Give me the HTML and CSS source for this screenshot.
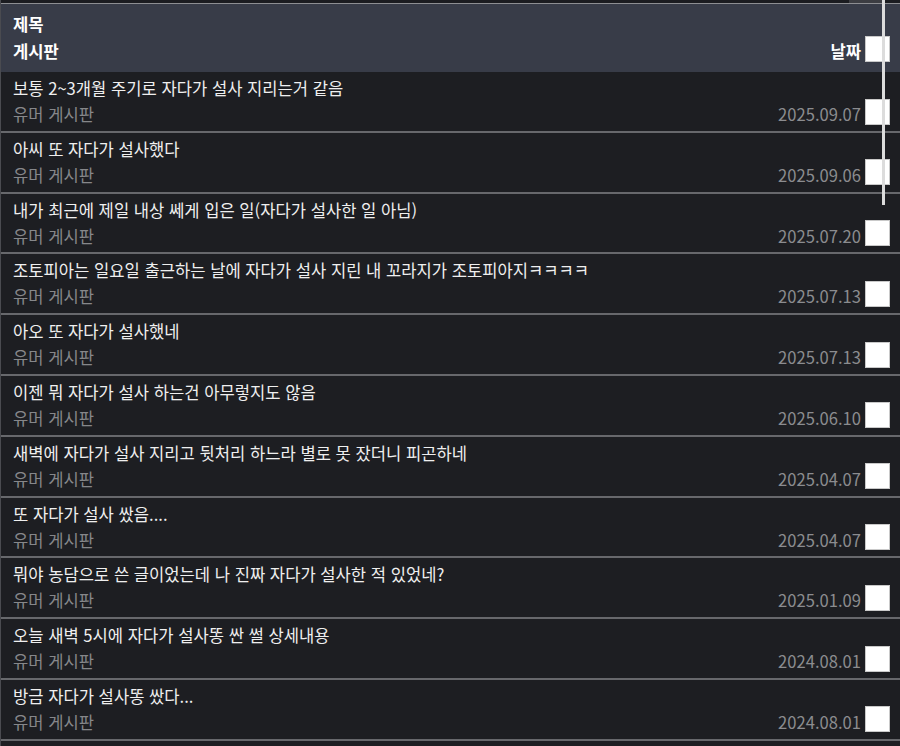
FILE: index.html
```html
<!DOCTYPE html>
<html lang="ko">
<head>
<meta charset="utf-8">
<title>게시판</title>
<link rel="stylesheet" href="styles.css">
</head>
<body>
<div class="page">
  <div class="topbar"><div class="topbar-block"></div></div>
  <div class="head">
    <div class="head-title">제목</div>
    <div class="head-line">
      <span class="head-board">게시판</span>
      <span class="right"><span class="head-date">날짜</span><span class="check"></span></span>
    </div>
  </div>
  <ul class="list">
    <li class="row"><div class="title">보통 2~3개월 주기로 자다가 설사 지리는거 같음</div><div class="meta"><span class="board">유머 게시판</span><span class="right"><span class="date">2025.09.07</span><span class="check"></span></span></div></li>
    <li class="row"><div class="title">아씨 또 자다가 설사했다</div><div class="meta"><span class="board">유머 게시판</span><span class="right"><span class="date">2025.09.06</span><span class="check"></span></span></div></li>
    <li class="row"><div class="title">내가 최근에 제일 내상 쎄게 입은 일(자다가 설사한 일 아님)</div><div class="meta"><span class="board">유머 게시판</span><span class="right"><span class="date">2025.07.20</span><span class="check"></span></span></div></li>
    <li class="row"><div class="title">조토피아는 일요일 출근하는 날에 자다가 설사 지린 내 꼬라지가 조토피아지ㅋㅋㅋㅋ</div><div class="meta"><span class="board">유머 게시판</span><span class="right"><span class="date">2025.07.13</span><span class="check"></span></span></div></li>
    <li class="row"><div class="title">아오 또 자다가 설사했네</div><div class="meta"><span class="board">유머 게시판</span><span class="right"><span class="date">2025.07.13</span><span class="check"></span></span></div></li>
    <li class="row"><div class="title">이젠 뭐 자다가 설사 하는건 아무렇지도 않음</div><div class="meta"><span class="board">유머 게시판</span><span class="right"><span class="date">2025.06.10</span><span class="check"></span></span></div></li>
    <li class="row"><div class="title">새벽에 자다가 설사 지리고 뒷처리 하느라 별로 못 잤더니 피곤하네</div><div class="meta"><span class="board">유머 게시판</span><span class="right"><span class="date">2025.04.07</span><span class="check"></span></span></div></li>
    <li class="row"><div class="title">또 자다가 설사 쌌음....</div><div class="meta"><span class="board">유머 게시판</span><span class="right"><span class="date">2025.04.07</span><span class="check"></span></span></div></li>
    <li class="row"><div class="title">뭐야 농담으로 쓴 글이었는데 나 진짜 자다가 설사한 적 있었네?</div><div class="meta"><span class="board">유머 게시판</span><span class="right"><span class="date">2025.01.09</span><span class="check"></span></span></div></li>
    <li class="row"><div class="title">오늘 새벽 5시에 자다가 설사똥 싼 썰 상세내용</div><div class="meta"><span class="board">유머 게시판</span><span class="right"><span class="date">2024.08.01</span><span class="check"></span></span></div></li>
    <li class="row"><div class="title">방금 자다가 설사똥 쌌다...</div><div class="meta"><span class="board">유머 게시판</span><span class="right"><span class="date">2024.08.01</span><span class="check"></span></span></div></li>
  </ul>
  <div class="scroll-thumb"></div>
</div>
</body>
</html>
```

FILE: styles.css
```css
* { box-sizing: border-box; }
html, body {
  margin: 0;
  padding: 0;
  background: #1d1e22;
}
body {
  font-family: "Noto Sans CJK KR", "Noto Sans", sans-serif;
  font-size: 16.6px;
  color: #efefef;
  overflow: hidden;
}
.page {
  position: relative;
  width: 900px;
  height: 746px;
  border-left: 1px solid #4a4b50;
}
.topbar {
  height: 4px;
  background: #1b1c20;
  border-bottom: 1px solid #8d8e92;
  display: flex;
  justify-content: flex-end;
  padding-right: 17px;
}
.topbar-block {
  width: 34px;
  height: 3px;
  background: #3c3d42;
}
.head {
  height: 68px;
  background: #383c48;
  padding: 8px 10px 0 12px;
  font-weight: 700;
  color: #ffffff;
}
.head-title {
  line-height: 25px;
}
.head-line {
  display: flex;
  justify-content: space-between;
  align-items: center;
  height: 28px;
}
.right {
  display: flex;
  align-items: center;
  gap: 4px;
}
.check {
  display: block;
  width: 25px;
  height: 26px;
  margin-top: -5px;
  background: #ffffff;
  border: 1px solid #c9c9c9;
}
.list {
  list-style: none;
  margin: 0;
  padding: 0;
}
.row {
  height: 60.8px;
  padding: 4px 10px 0 12px;
  border-bottom: 2px solid #67686c;
  background: #1d1e22;
}
.title {
  line-height: 24px;
  color: #efefef;
  white-space: nowrap;
}
.meta {
  display: flex;
  justify-content: space-between;
  align-items: center;
  height: 28px;
}
.board {
  color: #86878a;
}
.date {
  color: #8b8c8f;
}
.scroll-thumb {
  position: absolute;
  left: 881px;
  top: 0;
  width: 3px;
  height: 205px;
  background: #dcdcdc;
}
```
